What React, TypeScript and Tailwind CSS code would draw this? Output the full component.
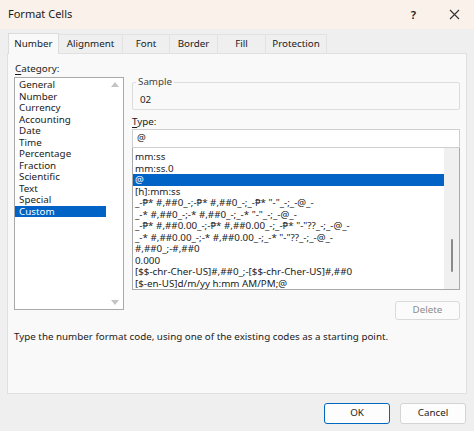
import React from 'react';

const categories = [
  'General',
  'Number',
  'Currency',
  'Accounting',
  'Date',
  'Time',
  'Percentage',
  'Fraction',
  'Scientific',
  'Text',
  'Special',
  'Custom',
];

const formats = [
  'mm:ss',
  'mm:ss.0',
  '@',
  '[h]:mm:ss',
  '_-₱* #,##0_-;-₱* #,##0_-;_-₱* "-"_-;_-@_-',
  '_-* #,##0_-;-* #,##0_-;_-* "-"_-;_-@_-',
  '_-₱* #,##0.00_-;-₱* #,##0.00_-;_-₱* "-"??_-;_-@_-',
  '_-* #,##0.00_-;-* #,##0.00_-;_-* "-"??_-;_-@_-',
  '#,##0_;-#,##0',
  '0.000',
  '[$$-chr-Cher-US]#,##0_;-[$$-chr-Cher-US]#,##0',
  '[$-en-US]d/m/yy h:mm AM/PM;@',
];

const tabs = [
  { label: 'Number', w: 'w-[51px]' },
  { label: 'Alignment', w: 'w-[64px]' },
  { label: 'Font', w: 'w-[47px]' },
  { label: 'Border', w: 'w-[48px]' },
  { label: 'Fill', w: 'w-[48px]' },
  { label: 'Protection', w: 'w-[61px]' },
];

export default function App() {
  return (
    <div
      className="w-[474px] h-[431px] bg-[#efefef] text-[#1b1b1b] text-[9.8px] flex flex-col overflow-hidden"
      style={{ fontFamily: '"Noto Sans", "Open Sans", sans-serif' }}
    >
      {/* title bar */}
      <div className="h-[29px] bg-[#f9f1ea] flex items-center pl-[8px] pr-[14px] shrink-0">
        <span className="text-[11px] flex-1">Format Cells</span>
        <span className="text-[11.5px] font-semibold mr-[33px]">?</span>
        <svg width="11" height="11" viewBox="0 0 11 11" className="text-[#333]">
          <path d="M1 1 L10 10 M10 1 L1 10" stroke="currentColor" strokeWidth="1.1" />
        </svg>
      </div>

      {/* tabs */}
      <div className="flex items-end pl-[8px] mt-[4px] h-[20px] shrink-0">
        {tabs.map((t, i) =>
          i === 0 ? (
            <div
              key={t.label}
              className={`${t.w} h-[21px] -mb-px bg-[#f9f9f9] border border-b-0 border-[#dcdcdc] flex items-center justify-center relative z-10`}
            >
              {t.label}
            </div>
          ) : (
            <div
              key={t.label}
              className={`${t.w} h-[19px] border-r border-t border-[#e2e2e2] flex items-center justify-center pt-[1px]`}
            >
              {t.label}
            </div>
          )
        )}
      </div>

      {/* panel */}
      <div className="mx-[7px] w-[460px] h-[341px] bg-[#f9f9f9] border border-[#e0e0e0] shrink-0 flex flex-col">
        <div className="flex pl-[6px] pt-[8px]">
          {/* category */}
          <div className="w-[110px] flex flex-col">
            <div className="pl-[1px] leading-[13px]">
              <span className="underline underline-offset-2">C</span>ategory:
            </div>
            <div className="mt-[2px] h-[233px] bg-white border border-[#a9a9a9] flex">
              <div className="flex-1 pt-[1px]">
                {categories.map((c) => (
                  <div
                    key={c}
                    className={`h-[11.5px] leading-[11.5px] pl-[4px] ${
                      c === 'Custom' ? 'bg-[#0063c5] text-white' : ''
                    }`}
                  >
                    {c}
                  </div>
                ))}
              </div>
              <div className="w-[17px] flex flex-col items-center justify-between py-[4px]">
                <svg width="8" height="5" viewBox="0 0 8 5">
                  <path d="M0 5 L4 0 L8 5 Z" fill="#c4c4c4" />
                </svg>
                <svg width="8" height="5" viewBox="0 0 8 5">
                  <path d="M0 0 L4 5 L8 0 Z" fill="#c4c4c4" />
                </svg>
              </div>
            </div>
          </div>

          {/* right column */}
          <div className="ml-[8px] w-[328px] flex flex-col">
            <div className="relative mt-[20px] h-[28px] border border-[#dcdcdc] rounded-[2px]">
              <span className="absolute left-[3px] -top-[8px] px-[2px] bg-[#f9f9f9] text-[#444]">Sample</span>
              <div className="pl-[7px] pt-[10px] leading-[13px]">02</div>
            </div>
            <div className="mt-[5px] leading-[13px]">
              <span className="underline underline-offset-2">T</span>ype:
            </div>
            <div className="mt-[1px] h-[19px] bg-white border border-[#cfcfcf] flex items-center pl-[4px]">
              @
            </div>
            <div className="h-[142px] bg-white border border-[#a9a9a9] border-t-0 flex">
              <div className="flex-1 pt-[3px] overflow-hidden">
                {formats.map((f) => (
                  <div
                    key={f}
                    className={`h-[11.5px] leading-[11.5px] pl-[2px] whitespace-nowrap ${
                      f === '@' ? 'bg-[#0063c5] text-white' : ''
                    }`}
                  >
                    {f}
                  </div>
                ))}
              </div>
              <div className="w-[15px] bg-[#f0f0f0] flex flex-col items-center pt-[91px]">
                <div className="w-[2px] h-[33px] bg-[#8a8a8a] rounded-full" />
              </div>
            </div>
            <div className="flex justify-end mt-[11px]">
              <button className="w-[65px] h-[19px] rounded-[3px] border border-[#dadada] bg-[#fbfbfb] text-[#8c8c8c]">
                Delete
              </button>
            </div>
          </div>
        </div>
        <div className="pl-[6px] mt-[10px] leading-[13px]">
          Type the number format code, using one of the existing codes as a starting point.
        </div>
      </div>

      {/* footer */}
      <div className="flex justify-end gap-[10px] pr-[8px] mt-[9px]">
        <button className="w-[66px] h-[21px] rounded-[3px] border border-[#0067c0] bg-[#fdfdfd]">OK</button>
        <button className="w-[66px] h-[21px] rounded-[3px] border border-[#d4d4d4] bg-[#fdfdfd]">Cancel</button>
      </div>
    </div>
  );
}
